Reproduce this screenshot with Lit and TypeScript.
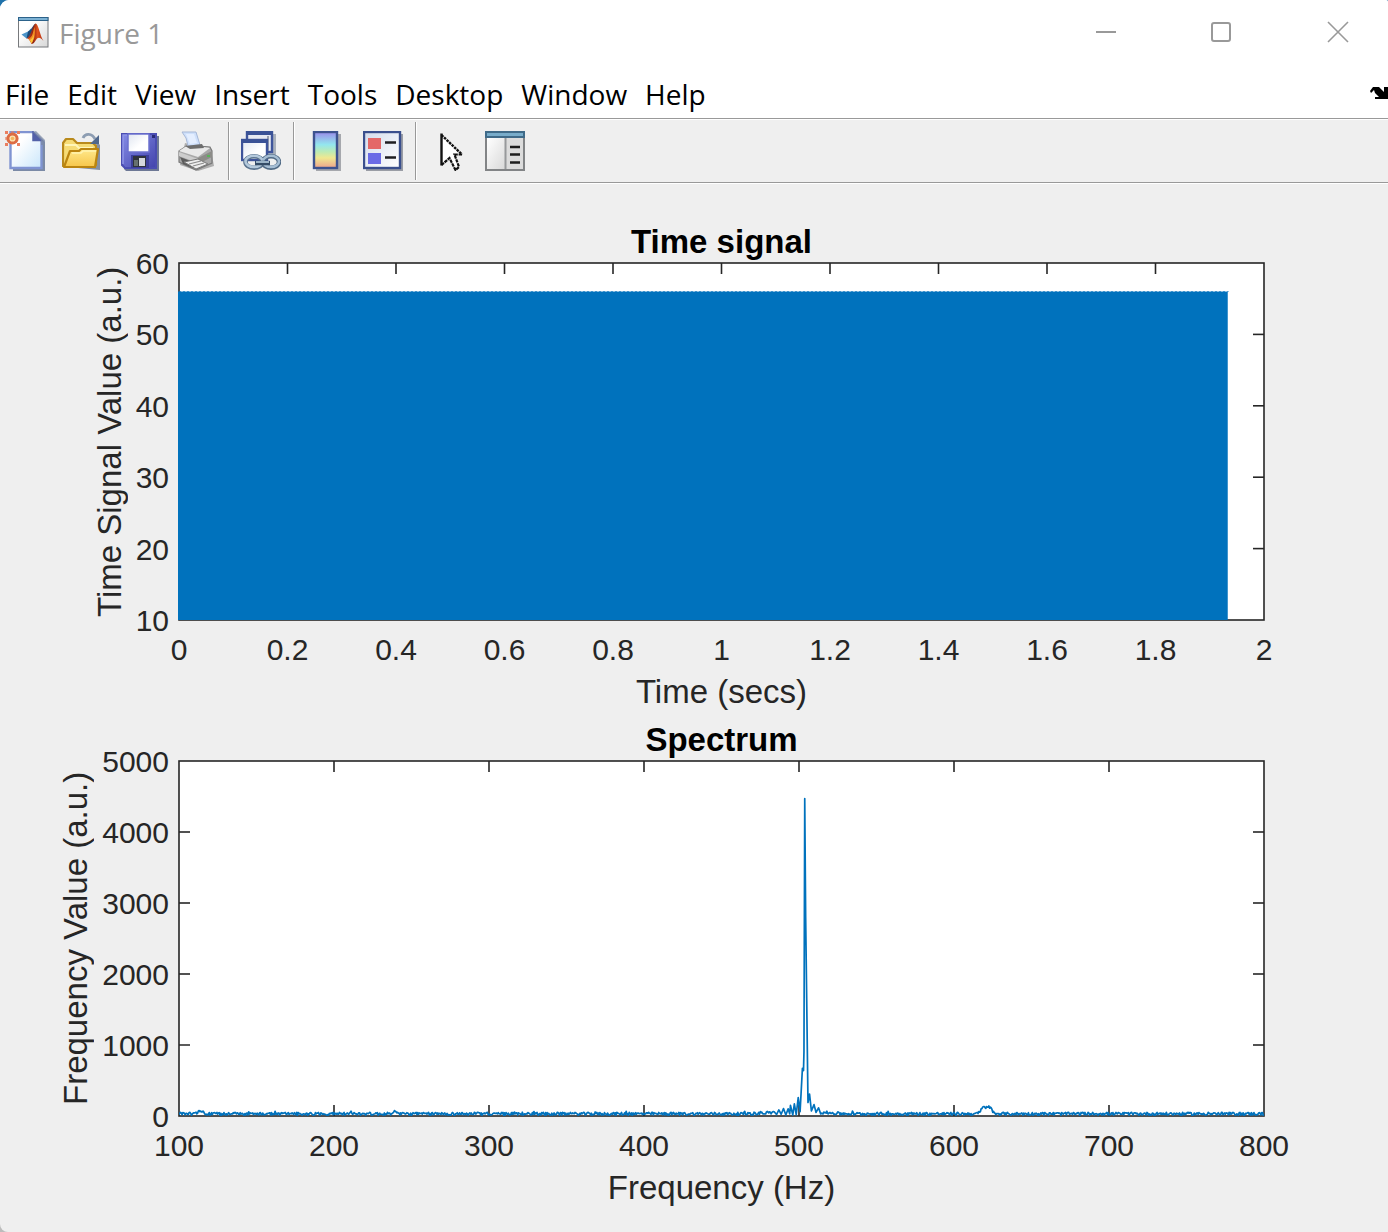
import { LitElement, html, svg, css, nothing, type TemplateResult } from "lit";
import { customElement, property } from "lit/decorators.js";

/* ---------- toolbar icons, each on a 40 x 40 grid ---------- */

const newIcon = svg`
  <path d="M8 4H33L40 11V40H8Z" fill="#7b8aa6"/>
  <path d="M5.5 1H28L36.5 9.5V37H5.5Z" fill="url(#page)" stroke="#8094d2" stroke-width="2.4"/>
  <path d="M28 1V9.5H37Z" fill="#5361a8" stroke="#5361a8" stroke-width="1.5"/>
  <path d="M31 0L40 9V14H36V9L28 1Z" fill="#7b8aa6" opacity=".75"/>
  <g fill="#ea7f60">
    <rect x="0" y="0" width="3" height="3"/><rect x="12" y="0" width="3" height="3"/>
    <rect x="0" y="12" width="3" height="3"/><rect x="12" y="12" width="3" height="3"/>
    <rect x="6" y="0" width="3" height="3" opacity=".5"/><rect x="0" y="6" width="3" height="3" opacity=".6"/>
  </g>
  <circle cx="7.5" cy="7.5" r="4.6" fill="#fbe3b0" stroke="#dd6c43" stroke-width="3"/>
  <circle cx="7.5" cy="7.5" r="1.8" fill="#f5b55e"/>`;

const openIcon = svg`
  <path d="M5 36L38 39V14L36 12Z" fill="#8590a4"/>
  <path d="M1 35V12L4 8H11L15 12H31L34 15V34Z" fill="#f6dc76" stroke="#b98a1c" stroke-width="2.2" stroke-linejoin="round"/>
  <path d="M3 14H14L17 17H31" fill="none" stroke="#fff6b8" stroke-width="2"/>
  <path d="M2 36L8 20H17L19 18H36L33 36Z" fill="url(#folder)" stroke="#bb8510" stroke-width="2.2" stroke-linejoin="round"/>
  <path d="M10 22H19L21 20H34" fill="none" stroke="#fff3b0" stroke-width="1.6"/>
  <path d="M21 7C23 2 30 2 33 8" fill="none" stroke="#8d9db2" stroke-width="2.8"/>
  <path d="M37 4V13H28Z" fill="#50688c"/>`;

const saveIcon = svg`
  <path d="M5 5H40V40H7L5 38Z" fill="#6d7895"/>
  <path d="M3 3H37V37H6L3 34Z" fill="url(#disk)" stroke="#4a4db2" stroke-width="2"/>
  <path d="M4 33V4H8" fill="none" stroke="#8f95e8" stroke-width="1.6"/>
  <rect x="9" y="3" width="21" height="18" fill="url(#label)" stroke="#6c72cf" stroke-width="1.5"/>
  <rect x="33" y="4" width="3" height="3" fill="#292b76"/>
  <rect x="12" y="24" width="18" height="13" fill="#3b3f98"/>
  <rect x="14" y="25" width="13" height="11" fill="#30343c"/>
  <rect x="20" y="27" width="6" height="8" fill="#d4d8dc"/>
  <rect x="15" y="29" width="4" height="6" fill="#66706f"/>`;

const printIcon = svg`
  <path d="M9 12L35 19L38 35L22 40L4 34Z" fill="#8b8b8b" opacity=".65"/>
  <path d="M3 20L12 14L34 16L36 20V32L20 39L3 31Z" fill="#a9a9a9" stroke="#7b7b7b" stroke-width="1.2"/>
  <path d="M3 20L12 14L34 17L22 26Z" fill="#e9e9e9"/>
  <path d="M3 21L22 28V32L3 25Z" fill="#cdcdcd"/>
  <path d="M22 27L36 20V26L22 33Z" fill="#8c8c88"/>
  <path d="M4 26L20 32L17 37L7 33Z" fill="#5d5d5d"/>
  <path d="M8 31L22 28L32 33L20 38Z" fill="#eeeeee" stroke="#777" stroke-width="1"/>
  <path d="M13 33L25 30M17 35L28 32" stroke="#8c8c8c" stroke-width="1.2"/>
  <rect x="31" y="24" width="3" height="2" fill="#59b259"/>
  <path d="M6 1H20L24 14L12 15L10 7Z" fill="#cfe0fb" stroke="#a6b7d6" stroke-width="1"/>
  <path d="M10 3H18L21 12L14 13Z" fill="#e4eeff"/>
  <path d="M9 15L26 13L28 17L14 18Z" fill="#6d6d6d"/>`;

const linkIcon = svg`
  <path d="M8 3H35V24H8Z" fill="#8d97a6" opacity=".7"/>
  <rect x="6" y="1" width="25" height="20" fill="#e6e9f2" stroke="#3e549b" stroke-width="2.4"/>
  <rect x="5" y="0" width="27" height="4" fill="#3a5296"/>
  <path d="M27 5V20" stroke="#9aa0ae" stroke-width="2"/>
  <rect x="1" y="9" width="25" height="20" fill="url(#label)" stroke="#3e549b" stroke-width="2.4"/>
  <rect x="0" y="8" width="27" height="4" fill="#3a5296"/>
  <g fill="none">
    <ellipse cx="13" cy="31" rx="8.5" ry="5.8" stroke="#5c7590" stroke-width="4.6"/>
    <ellipse cx="30" cy="31" rx="8" ry="5.8" stroke="#506984" stroke-width="4.6"/>
    <ellipse cx="13" cy="30.4" rx="8.5" ry="5.6" stroke="#b4c9dc" stroke-width="2.6"/>
    <ellipse cx="30" cy="30.4" rx="8" ry="5.6" stroke="#a5bdd3" stroke-width="2.6"/>
    <path d="M14 32H29" stroke="#354c67" stroke-width="4.5"/>
    <path d="M15 31H28" stroke="#a9c0d4" stroke-width="1.8"/>
  </g>`;

const colorbarIcon = svg`
  <rect x="10" y="3" width="25" height="37" fill="#a6a8ad"/>
  <rect x="8" y="1" width="23" height="36" fill="url(#rainbow)" stroke="#3d528f" stroke-width="2.4"/>`;

const legendIcon = svg`
  <rect x="3" y="3" width="37" height="37" fill="#9a9da5"/>
  <rect x="1" y="1" width="36" height="36" fill="url(#legend)" stroke="#3a4f8d" stroke-width="2.4"/>
  <rect x="5" y="7" width="13" height="11" fill="#e46868"/>
  <rect x="5" y="22" width="13" height="11" fill="#6b6be6"/>
  <path d="M22 11.5H33M22 26.5H33" stroke="#1e1e22" stroke-width="2.5"/>`;

const cursorIcon = svg`
  <path d="M13.5 4L34 23.5H26.5L31 36L27.5 39L21.5 27L13.5 34Z" fill="#fff"/>
  <path d="M13.5 4L34 23.5" stroke="#111" stroke-width="2.4" stroke-dasharray="2.6 .9"/>
  <path d="M13.5 2.5V34.5" stroke="#111" stroke-width="2.4"/>
  <path d="M34 23.5H26.5L31 36L27.5 39L21.5 27L13.5 34" fill="none" stroke="#111" stroke-width="2.2" stroke-dasharray="3.4 .8"/>`;

const panelIcon = svg`
  <rect x="1" y="1" width="38" height="38" fill="#dcdcdc" stroke="#828486" stroke-width="2"/>
  <rect x="2" y="7" width="18" height="31" fill="url(#sheet)"/>
  <rect x="0" y="0" width="40" height="7" fill="#3f6a88"/>
  <rect x="2" y="2" width="36" height="3" fill="#78acca"/>
  <path d="M20.5 7V38" stroke="#97999b" stroke-width="2"/>
  <path d="M25 16H35M25 23.5H35M25 31.5H35" stroke="#1d1d1d" stroke-width="2.5"/>`;

const iconPaints = svg`<defs>
  <linearGradient id="page" x2="1" y2="1"><stop offset=".3" stop-color="#fff"/><stop offset="1" stop-color="#c9e6fb"/></linearGradient>
  <linearGradient id="folder" x2="0" y2="1"><stop stop-color="#ffe98c"/><stop offset="1" stop-color="#f7c64a"/></linearGradient>
  <linearGradient id="disk" x2="1" y2="1"><stop stop-color="#858ce6"/><stop offset="1" stop-color="#4243ac"/></linearGradient>
  <linearGradient id="label" x2="1" y2="1"><stop stop-color="#dfe5f0"/><stop offset=".6" stop-color="#fff"/></linearGradient>
  <linearGradient id="legend" x2="1" y2="1"><stop stop-color="#d4dcec"/><stop offset="1" stop-color="#fff"/></linearGradient>
  <linearGradient id="sheet" x2="1" y2="1"><stop stop-color="#fff"/><stop offset="1" stop-color="#d9d9d9"/></linearGradient>
  <linearGradient id="rainbow" x2="0" y2="1"><stop stop-color="#9a8cea"/><stop offset=".35" stop-color="#93e6ee"/><stop offset=".55" stop-color="#bdebb4"/><stop offset=".72" stop-color="#f0e890"/><stop offset="1" stop-color="#eda28c"/></linearGradient>
</defs>`;

interface Tool {
  name: string;
  icon: TemplateResult;
}

const toolGroups: Tool[][] = [
  [
    { name: "New Figure", icon: newIcon },
    { name: "Open File", icon: openIcon },
    { name: "Save Figure", icon: saveIcon },
    { name: "Print Figure", icon: printIcon },
  ],
  [{ name: "Link Plot", icon: linkIcon }],
  [
    { name: "Insert Colorbar", icon: colorbarIcon },
    { name: "Insert Legend", icon: legendIcon },
  ],
  [
    { name: "Edit Plot", icon: cursorIcon },
    { name: "Open Property Inspector", icon: panelIcon },
  ],
];

const menus = ["File", "Edit", "View", "Insert", "Tools", "Desktop", "Window", "Help"];

/* ---------- spectrum data: [frequency in Hz, magnitude] ---------- */

const features: [number, number][] = [
  [484, 60], [485.5, 20], [487, 85], [488.5, 25], [490, 105], [491.5, 15], [493, 100], [494, 30],
  [494.5, 150], [496, 15], [497, 170], [498.2, 20], [499.5, 260], [500.7, 60], [502.2, 670],
  [502.9, 640], [503.2, 900], [503.7, 4470], [504.3, 2800], [505.8, 190], [506.8, 310],
  [508, 70], [509.7, 160], [511, 50], [512.6, 115], [514, 30],
];

const bump = (hz: number, centre: number, width: number, height: number) =>
  height * Math.exp(-(((hz - centre) / width) ** 4));

function spectrum(): [number, number][] {
  let seed = 20;
  const random = () => {
    seed = (seed * 1103515245 + 12345) % 2147483648;
    return seed / 2147483648;
  };
  const points: [number, number][] = [];
  for (let hz = 100; hz <= 800; hz += 0.5) {
    const noise = 10 + 42 * random() + (random() > 0.97 ? 22 : 0);
    if (hz >= 484 && hz <= 514) continue;
    const peaks =
      bump(hz, 114, 2.5, 40) + bump(hz, 239, 2, 30) + bump(hz, 621, 4, 95) + bump(hz, 499, 24, 22);
    points.push([hz, noise + peaks]);
  }
  return [...points, ...features].sort((a, b) => a[0] - b[0]);
}

/* ---------- one set of axes ---------- */

@customElement("plot-axes")
class PlotAxes extends LitElement {
  @property() heading = "";
  @property() xLabel = "";
  @property() yLabel = "";
  @property({ attribute: false }) xTicks: number[] = [];
  @property({ attribute: false }) yTicks: number[] = [];
  @property({ attribute: false }) block: [number, number] | null = null;
  @property({ attribute: false }) line: [number, number][] | null = null;

  static styles = css`
    :host {
      display: grid;
      grid-template: 39px minmax(120px, 1fr) auto auto / 179px minmax(0, 1fr);
      min-height: 0;
      padding: 0 124px 12px 0;
      color: #262626;
      font-size: 30px;
      line-height: 36px;
    }
    h2 {
      grid-column: 2;
      margin: 0;
      color: #000;
      font-size: 33px;
      line-height: 36px;
      text-align: center;
    }
    .side {
      grid-column: 1;
      display: flex;
      justify-content: flex-end;
      gap: 8px;
      padding-right: 10px;
    }
    .y-label {
      writing-mode: vertical-rl;
      transform: rotate(180deg);
      font-size: 33px;
      text-align: center;
      white-space: nowrap;
    }
    .y-ticks {
      display: flex;
      flex-direction: column-reverse;
      justify-content: space-between;
      align-items: flex-end;
      margin: 1px 0 -1px;
    }
    .y-ticks span {
      display: flex;
      align-items: center;
      height: 0;
    }
    .plot {
      display: block;
      width: 100%;
      height: 100%;
      min-height: 0;
      overflow: visible;
    }
    .cell {
      display: grid;
      grid-template-rows: minmax(0, 1fr);
      min-height: 0;
    }
    .frame {
      fill: none;
      stroke: #262626;
      stroke-width: 1.6;
    }
    .tick {
      stroke: #262626;
      stroke-width: 1.6;
    }
    .ground {
      fill: #fff;
    }
    .fill {
      fill: #0072bd;
    }
    .crest {
      stroke: #0072bd;
      stroke-dasharray: 2 2;
      opacity: 0.6;
    }
    .curve {
      fill: none;
      stroke: #0072bd;
      stroke-width: 1.7;
      stroke-linejoin: round;
      vector-effect: non-scaling-stroke;
    }
    .x-ticks {
      grid-column: 2;
      display: flex;
      justify-content: space-between;
      padding-top: 12px;
    }
    .x-ticks span {
      display: flex;
      justify-content: center;
      width: 0;
    }
    .x-label {
      grid-column: 2;
      padding-top: 6px;
      font-size: 33px;
      text-align: center;
    }
  `;

  private curve(points: [number, number][]) {
    const [x0, x1] = [this.xTicks[0], this.xTicks[this.xTicks.length - 1]];
    const top = this.yTicks[this.yTicks.length - 1];
    const path = points.map(([x, y]) => `${(x - x0).toFixed(1)},${(top - y).toFixed(0)}`).join(" ");
    return svg`<svg width="100%" height="100%" viewBox="0 0 ${x1 - x0} ${top}" preserveAspectRatio="none">
      <polyline class="curve" points=${path}></polyline>
    </svg>`;
  }

  private filled([x, y]: [number, number]) {
    const [y0, y1] = [this.yTicks[0], this.yTicks[this.yTicks.length - 1]];
    const width = (x / this.xTicks[this.xTicks.length - 1]) * 100;
    const top = ((y1 - y) / (y1 - y0)) * 100;
    return svg`
      <rect class="fill" x="-1" y="${top}%" width="${width}%" height="${100 - top}%"></rect>
      <line class="crest" x1="0" x2="${width}%" y1="${top}%" y2="${top}%"></line>`;
  }

  /* positions of the tick marks between the two ends of an axis, in percent */
  private marks(ticks: number[]) {
    return ticks.map((_, i) => (i / (ticks.length - 1)) * 100).slice(1, -1);
  }

  render() {
    const xs = this.marks(this.xTicks);
    const ys = this.marks(this.yTicks);
    return html`
      <h2>${this.heading}</h2>
      <div class="side">
        <div class="y-label">${this.yLabel}</div>
        <div class="y-ticks">${this.yTicks.map((t) => html`<span>${t}</span>`)}</div>
      </div>
      <div class="cell">
        <svg class="plot" role="img" aria-label=${this.heading}>
          <rect class="ground" width="100%" height="100%"></rect>
          <rect class="frame" width="100%" height="100%"></rect>
          ${xs.map((x) => svg`<line class="tick" x1="${x}%" x2="${x}%" y1="0" y2="11"></line>`)}
          ${ys.map((y) => svg`<line class="tick" x1="0" x2="11" y1="${y}%" y2="${y}%"></line>`)}
          <svg y="100%" overflow="visible">
            ${xs.map((x) => svg`<line class="tick" x1="${x}%" x2="${x}%" y1="0" y2="-11"></line>`)}
          </svg>
          <svg x="100%" overflow="visible">
            ${ys.map((y) => svg`<line class="tick" x1="0" x2="-11" y1="${y}%" y2="${y}%"></line>`)}
          </svg>
          ${this.block ? this.filled(this.block) : nothing}
          ${this.line ? this.curve(this.line) : nothing}
        </svg>
      </div>
      <div class="x-ticks">${this.xTicks.map((t) => html`<span>${t}</span>`)}</div>
      <div class="x-label">${this.xLabel}</div>
    `;
  }
}

/* ---------- figure window ---------- */

@customElement("app-root")
class AppRoot extends LitElement {
  static styles = css`
    :host {
      display: block;
      background: linear-gradient(#1f72ab 50%, #bcbcbc 50%);
      font-family: "Liberation Sans", Arial, sans-serif;
    }
    .window {
      display: flex;
      flex-direction: column;
      min-height: 100vh;
      border-radius: 9px 2px 0 8px;
      background: #efefef;
      overflow: hidden;
    }
    .title-bar,
    .menu-bar {
      display: flex;
      align-items: center;
      background: #fff;
      font-family: "Open Sans", "Noto Sans", sans-serif;
      font-size: 28px;
      line-height: 38px;
    }
    .title-bar {
      height: 64px;
      padding: 0 40px 0 18px;
      gap: 10px;
    }
    h1 {
      flex: 1;
      margin: 0;
      padding-top: 2px;
      color: #999;
      font: inherit;
    }
    .logo {
      width: 31px;
      height: 31px;
    }
    button {
      display: flex;
      padding: 0;
      border: 0;
      background: none;
      color: inherit;
      font: inherit;
    }
    .controls {
      display: flex;
      gap: 96px;
    }
    .controls svg {
      width: 20px;
      height: 20px;
      overflow: visible;
      fill: none;
      stroke: #999;
      stroke-width: 2;
    }
    .menu-bar {
      height: 48px;
      padding: 6px 0 0 5px;
    }
    .menus {
      display: flex;
      flex: 1;
      gap: 18px;
    }
    .dock svg {
      width: 18px;
      height: 14px;
    }
    .tool-bar {
      display: flex;
      align-items: center;
      height: 63px;
      padding-left: 5px;
      border-top: 1px solid #999;
      border-bottom: 1px solid #999;
      box-shadow: inset 0 1px #fff, 0 1px #fff;
    }
    .tool-group {
      display: flex;
      align-items: center;
      gap: 17px;
      height: 58px;
    }
    .tool-group + .tool-group {
      margin-left: 12px;
      padding-left: 12px;
      border-left: 1px solid #999;
      box-shadow: inset 1px 0 #fff;
    }
    .tool-group svg {
      width: 40px;
      height: 40px;
    }
    .figure {
      display: grid;
      flex: 1;
      grid-template-rows: minmax(0, 498fr) minmax(0, 496fr);
      padding: 41px 0 14px;
    }
  `;

  private data = spectrum();

  render() {
    return html`
      <div class="window">
        <header class="title-bar">
          <svg class="logo" viewBox="0 0 31 31" aria-hidden="true">
            <defs>
              <linearGradient id="paper" x2="1" y2="1"><stop offset=".3" stop-color="#fff"/><stop offset="1" stop-color="#d8d8d8"/></linearGradient>
              <linearGradient id="peak" x2="1"><stop stop-color="#c9401c"/><stop offset=".4" stop-color="#8f2412"/><stop offset=".65" stop-color="#e0531c"/><stop offset="1" stop-color="#b22c12"/></linearGradient>
            </defs>
            <rect x=".5" y=".5" width="29.5" height="29.5" fill="url(#paper)" stroke="#77797c"/>
            <rect x="0" y="0" width="30.5" height="4" fill="#2c628a"/>
            <rect x="1" y="1" width="28.5" height="2" fill="#7db2d4"/>
            <path d="M3.5 17.5L10 14.5L13 11.5L14 17L8.5 21.5Z" fill="#4a93c8"/>
            <path d="M10 14.5C13 13.5 15 8 17.5 6.5L14 20L8.5 21.5Z" fill="#1d4a78"/>
            <path d="M8.5 21.5C13 20 14 9 17.5 6.5C20.5 6.5 22 19 25.5 24C22 20 20 20 18 23C16 26 15 27 13.5 27C12.5 24 11 21 8.5 21.5Z" fill="url(#peak)"/>
            <path d="M10.5 22C15 20 15 14 16.5 10C17.5 16 17 22 13.5 26.5Z" fill="#f08a22"/>
            <path d="M12 23C14 22 15 20 16 17C16 21 15 24 13.5 26.5Z" fill="#fbc63c"/>
          </svg>
          <h1>Figure 1</h1>
          <div class="controls">
            <button aria-label="Minimize"><svg viewBox="0 0 20 20"><path d="M0 10H20"/></svg></button>
            <button aria-label="Maximize"><svg viewBox="0 0 20 20"><rect x="0" y="1" width="18" height="18" rx="2"/></svg></button>
            <button aria-label="Close"><svg viewBox="0 0 20 20"><path d="M0 0L20 20M20 0L0 20" stroke-width="1.6"/></svg></button>
          </div>
        </header>
        <div class="menu-bar">
          <nav class="menus">${menus.map((m) => html`<button>${m}</button>`)}</nav>
          <button class="dock" aria-label="Dock Figure">
            <svg viewBox="0 0 18 14"><path d="M0 4L3 0H9L14 5V0H18V12H5V10H9L5 6L4 3L1 6Z" fill="#000"/></svg>
          </button>
        </div>
        <div class="tool-bar" role="toolbar" aria-label="Figure">
          ${toolGroups.map(
            (group) => html`<div class="tool-group">
              ${group.map(
                (tool) => html`<button aria-label=${tool.name} title=${tool.name}>
                  <svg viewBox="0 0 40 40">${iconPaints}${tool.icon}</svg>
                </button>`,
              )}
            </div>`,
          )}
        </div>
        <main class="figure">
          <plot-axes
            heading="Time signal"
            .xLabel=${"Time (secs)"}
            .yLabel=${"Time Signal Value (a.u.)"}
            .xTicks=${[0, 0.2, 0.4, 0.6, 0.8, 1, 1.2, 1.4, 1.6, 1.8, 2]}
            .yTicks=${[10, 20, 30, 40, 50, 60]}
            .block=${[1.935, 56]}
          ></plot-axes>
          <plot-axes
            heading="Spectrum"
            .xLabel=${"Frequency (Hz)"}
            .yLabel=${"Frequency Value (a.u.)"}
            .xTicks=${[100, 200, 300, 400, 500, 600, 700, 800]}
            .yTicks=${[0, 1000, 2000, 3000, 4000, 5000]}
            .line=${this.data}
          ></plot-axes>
        </main>
      </div>
    `;
  }
}
